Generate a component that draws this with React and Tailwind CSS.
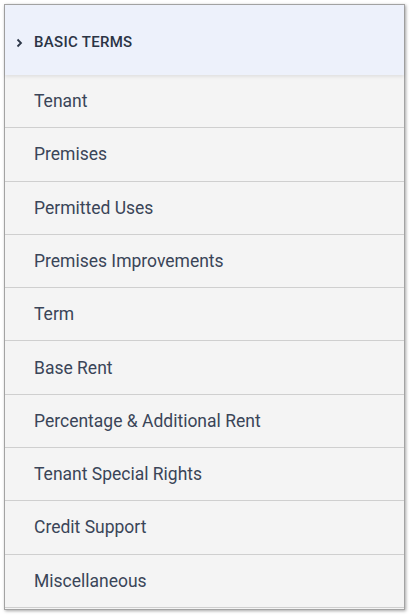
const ITEMS = [
  "Tenant",
  "Premises",
  "Permitted Uses",
  "Premises Improvements",
  "Term",
  "Base Rent",
  "Percentage & Additional Rent",
  "Tenant Special Rights",
  "Credit Support",
  "Miscellaneous",
];

export default function App() {
  return (
    <div className="w-[409px] h-[615px] bg-white p-[4px] pb-[5px]" style={{ fontFamily: "Roboto, 'Liberation Sans', sans-serif" }}>
      <div className="h-full flex flex-col border border-[#a3a3a3] bg-[#f4f4f4] shadow-[1px_1px_3px_rgba(0,0,0,0.35)]">
        {/* section header */}
        <div className="relative z-10 h-[70px] shrink-0 flex items-center pt-[5px] bg-[#edf1fb] shadow-[0_2px_3px_rgba(0,0,0,0.08)]">
          <svg className="ml-[11px] w-[8px] h-[10px]" viewBox="0 0 8 10" fill="none">
            <path d="M1.5 1.5 L5 5 L1.5 8.5" stroke="#2d3748" strokeWidth="1.8" />
          </svg>
          <span className="ml-[10px] text-[15px] font-medium tracking-[0.3px] text-[#2b3445]">BASIC TERMS</span>
        </div>
        {/* items */}
        <div className="flex-1 flex flex-col pb-[1px]">
          {ITEMS.map((label) => (
            <div key={label} className="flex-1 flex items-center pl-[29px] border-b border-[#cfcfcf] text-[17.5px] text-[#3a4558]">
              {label}
            </div>
          ))}
        </div>
      </div>
    </div>
  );
}
